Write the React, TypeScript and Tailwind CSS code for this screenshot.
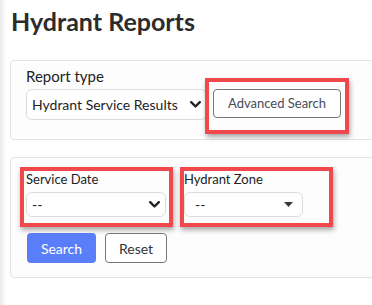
import React from "react";

const Chevron = () => (
  <svg width="11" height="7" viewBox="0 0 11 7" fill="none">
    <path d="M1.2 1.2 L5.5 5.5 L9.8 1.2" stroke="#222" strokeWidth="2.4" strokeLinecap="round" strokeLinejoin="round" />
  </svg>
);

const Caret = () => (
  <svg width="9" height="5" viewBox="0 0 9 5">
    <path d="M0 0 L9 0 L4.5 5 Z" fill="#3a3a3a" />
  </svg>
);

export default function App() {
  return (
    <div className="relative w-[372px] h-[305px] overflow-hidden bg-white text-[#212529]" style={{ fontFamily: "Lato, 'Noto Sans', sans-serif" }}>
      <div className="absolute left-0 top-0 h-full w-[6px] bg-linear-to-r from-[#e9e9e9] to-white" />
      <div className="pl-[11px] pt-[6px]">
        <h1 className="text-[25px] leading-[30px] font-bold text-[#2c2c2c]">Hydrant Reports</h1>
      </div>

      <div className="ml-[10px] mt-[24px] w-[420px] border border-[#e4e4e4] rounded-[4px] bg-[#fdfdfd] pl-[15px] pt-[5px] pb-[5px] flex items-start">
        <div className="flex flex-col">
          <div className="text-[15px] leading-[20px] text-[#222]">Report type</div>
          <div className="mt-[3px] w-[181px] h-[31px] border border-[#dcdcdc] rounded-[6px] bg-white flex items-center justify-between pl-[5px] pr-[5px]">
            <span className="text-[14px] text-[#1e1e1e]">Hydrant Service Results</span>
            <Chevron />
          </div>
        </div>
        <div className="mt-[12px] ml-[-2px] border-[4px] border-[#f0484d] px-[4px] pt-[7px] pb-[12px] shadow-[1px_3px_5px_rgba(0,0,0,0.35)]">
          <div className="w-[128px] h-[29px] border border-[#777] rounded-[4px] bg-white flex items-center justify-center text-[13px] text-[#4a4a55]">
            Advanced Search
          </div>
        </div>
      </div>

      <div className="ml-[10px] mt-[17px] w-[420px] border border-[#e4e4e4] rounded-[4px] bg-[#fdfdfd] pl-[9px] pt-[9px] pb-[14px]">
        <div className="flex items-start gap-[7px]">
          <div className="w-[153px] border-[4px] border-[#f0484d] pl-[2px] pb-[6px] shadow-[1px_3px_5px_rgba(0,0,0,0.35)]">
            <div className="text-[13px] leading-[16px] text-[#222]">Service Date</div>
            <div className="mt-[5px] w-[140px] h-[25px] border border-[#dcdcdc] rounded-[6px] bg-white flex items-center justify-between pl-[5px] pr-[5px]">
              <span className="text-[14px] text-[#1e1e1e]">--</span>
              <Chevron />
            </div>
          </div>
          <div className="w-[153px] border-[4px] border-[#f0484d] pl-0 pb-[6px] shadow-[1px_3px_5px_rgba(0,0,0,0.35)]">
            <div className="text-[13px] leading-[16px] text-[#222]">Hydrant Zone</div>
            <div className="mt-[5px] w-[119px] h-[25px] border border-[#dcdcdc] rounded-[6px] bg-white flex items-center justify-between pl-[10px] pr-[9px]">
              <span className="text-[14px] text-[#1e1e1e]">--</span>
              <Caret />
            </div>
          </div>
        </div>
        <div className="mt-[6px] ml-[7px] flex gap-[9px]">
          <div className="w-[69px] h-[30px] rounded-[4px] bg-[#5a7efa] text-white text-[14px] flex items-center justify-center">Search</div>
          <div className="w-[62px] h-[30px] rounded-[4px] border border-[#777] bg-white text-[#333] text-[14px] flex items-center justify-center">Reset</div>
        </div>
      </div>
    </div>
  );
}
